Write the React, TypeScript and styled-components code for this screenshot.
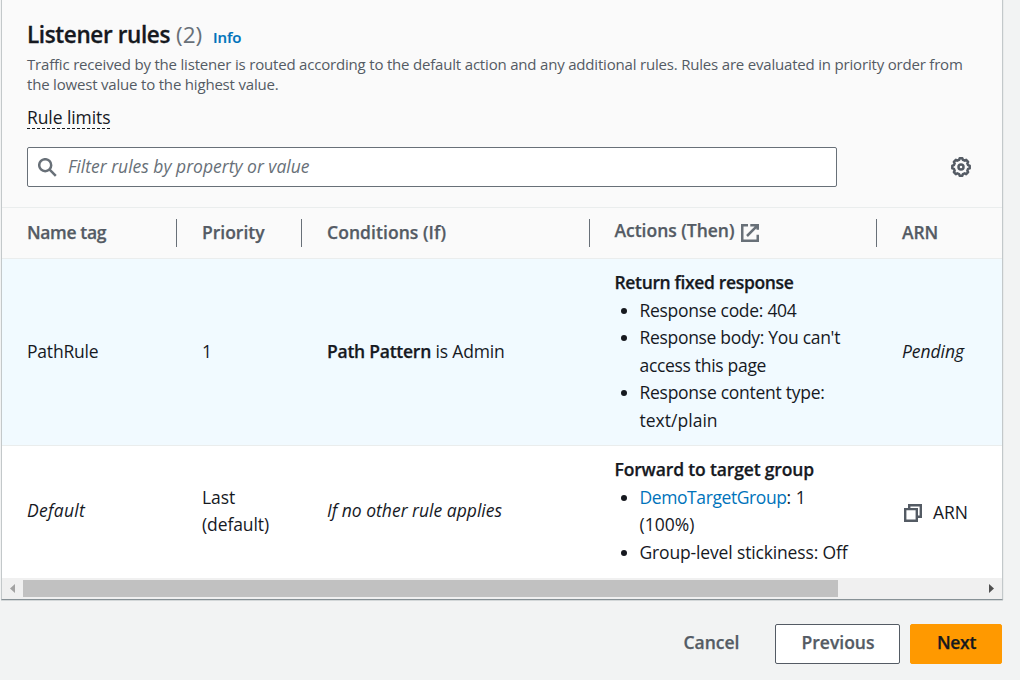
import React from 'react';
import styled, { createGlobalStyle } from 'styled-components';

const GlobalStyle = createGlobalStyle`
  * { box-sizing: border-box; }
  body {
    margin: 0;
    height: 680px;
    overflow: hidden;
    background: #f2f3f3;
    color: #16191f;
    font: 400 17.5px/27.5px "Open Sans", "Noto Sans", sans-serif;
  }
`;

const Page = styled.main`
  width: 1020px;
  height: 680px;
  padding: 0 17px 0 1px;
`;

const Card = styled.section`
  height: 600px;
  border: 1px solid #c3c8ca;
  border-top: 0;
  border-bottom-color: #879196;
  background: #fff;
  box-shadow: 0 1px 0 #d3d7d8, 1px 0 0 #e9ebeb;
`;

const CardHeader = styled.header`
  height: 208px;
  padding: 21px 25px 0;
  background: #fafafa;
  border-bottom: 1px solid #eaeded;
`;

const Tracked = styled.span<{ $ls: number }>`
  letter-spacing: ${(p) => p.$ls}px;
`;

const Strong = styled(Tracked)`
  font-weight: 600;
  -webkit-text-stroke: 0.25px currentColor;
`;

const Emphasis = styled(Tracked)`
  font-style: italic;
`;

const TitleRow = styled.div`
  display: flex;
  align-items: baseline;
  height: 27px;
  line-height: 28px;
`;

const Title = styled.h2`
  margin: 0;
  width: 149px;
  font-size: 22.5px;
  font-weight: 600;
  letter-spacing: -0.38px;
  -webkit-text-stroke: 0.3px currentColor;
  white-space: nowrap;
`;

const Counter = styled.span`
  width: 37px;
  color: #687078;
  font-size: 22.5px;
`;

const InfoLink = styled.a`
  color: #0073bb;
  font-size: 15px;
  font-weight: 600;
  letter-spacing: -0.08px;
  -webkit-text-stroke: 0.2px currentColor;
`;

const Description = styled.p`
  margin: 6px 0 0;
  color: #545b64;
  font-size: 15px;
  line-height: 20px;
  letter-spacing: -0.19px;
`;

const LimitsTrigger = styled.div`
  width: fit-content;
  height: 23px;
  margin-top: 12px;
  border-bottom: 1px dashed #16191f;
  line-height: 23px;
  letter-spacing: -0.08px;
`;

const FilterBar = styled.div`
  display: flex;
  align-items: center;
  justify-content: space-between;
  margin-top: 18px;
  padding-right: 6px;
`;

const SearchField = styled.div`
  display: flex;
  align-items: center;
  gap: 11px;
  width: 810px;
  height: 40px;
  padding: 0 10px;
  border: 1px solid #687078;
  border-radius: 2px;
  background: #fff;
  color: #687078;
`;

const Placeholder = styled.span`
  font-style: italic;
`;

const Icon = styled.svg<{ $color: string }>`
  flex: none;
  display: block;
  fill: none;
  stroke: ${(p) => p.$color};
`;

const GridRow = styled.div`
  display: grid;
  grid-template-columns: 175px 125px 287.5px 287.5px 125px;
`;

const HeadRow = styled(GridRow)`
  height: 51px;
  align-items: center;
  background: #fafafa;
  border-bottom: 1px solid #eaeded;
  color: #545b64;
  font-weight: 600;
  -webkit-text-stroke: 0.25px currentColor;
`;

const HeadCell = styled.div<{ $last?: boolean }>`
  display: flex;
  align-items: center;
  height: 28px;
  padding-left: 25px;
  border-right: ${(p) => (p.$last ? '0' : '1px solid #687078')};
  white-space: nowrap;
`;

const ActionsLabel = styled(Tracked)`
  margin-right: 6.8px;
  padding-bottom: 4px;
`;

const BodyRow = styled(GridRow)<{ $height: number; $highlight?: boolean }>`
  height: ${(p) => p.$height}px;
  align-items: center;
  padding-bottom: ${(p) => (p.$highlight ? 1 : 2)}px;
  background: ${(p) => (p.$highlight ? '#f1faff' : '#fff')};
  border-bottom: ${(p) => (p.$highlight ? '1px solid #eaeded' : '0')};
`;

const Cell = styled.div`
  padding: 0 25px;
`;

const ArnCell = styled.div`
  display: flex;
  align-items: center;
  gap: 11px;
  padding: 4px 0 0 27px;
`;

const ActionList = styled.ul`
  margin: 0;
  padding: 0 0 0 25px;
`;

const ActionItem = styled.li<{ $ls: number }>`
  letter-spacing: ${(p) => p.$ls}px;
`;

const TargetLink = styled.a`
  color: #0073bb;
  letter-spacing: -0.41px;
`;

const ScrollTrack = styled.div`
  display: flex;
  align-items: center;
  height: 21px;
  background: #f0f0f0;
`;

const ScrollThumb = styled.div`
  width: 815px;
  height: 17px;
  margin-right: auto;
  background: #c1c1c1;
`;

const ScrollArrow = styled.svg<{ $enabled?: boolean }>`
  flex: none;
  width: 21px;
  height: 21px;
  fill: ${(p) => (p.$enabled ? '#505050' : '#a3a3a3')};
`;

const Footer = styled.footer`
  display: flex;
  justify-content: flex-end;
  gap: 10px;
  margin-top: 24px;
  padding-right: 1px;
`;

const Button = styled.button<{ $kind: 'link' | 'normal' | 'primary'; $width: number; $ls?: number }>`
  width: ${(p) => p.$width}px;
  height: 40px;
  padding: 0 0 2px 1px;
  border: 1px solid
    ${(p) => ({ link: 'transparent', normal: '#545b64', primary: '#ff9900' })[p.$kind]};
  border-radius: 2px;
  background: ${(p) => ({ link: 'transparent', normal: '#fff', primary: '#ff9900' })[p.$kind]};
  color: ${(p) => (p.$kind === 'primary' ? '#16191f' : '#545b64')};
  font: inherit;
  font-weight: 600;
  letter-spacing: ${(p) => p.$ls ?? 0}px;
  -webkit-text-stroke: 0.25px currentColor;
`;

const gearPath = (() => {
  const points: string[] = [];
  for (let i = 0; i < 8; i += 1) {
    [[-9, 8.8], [9, 8.8], [15, 7.3], [30, 7.3]].forEach(([offset, radius]) => {
      const a = ((i * 45 + offset - 90) * Math.PI) / 180;
      points.push(`${(10 + radius * Math.cos(a)).toFixed(2)} ${(10 + radius * Math.sin(a)).toFixed(2)}`);
    });
  }
  return `M${points.join('L')}Z`;
})();

const SearchIcon = () => (
  <Icon $color="#687078" width="19" height="19" viewBox="0 0 19 19" strokeWidth="2.5">
    <circle cx="7.2" cy="7.2" r="6" />
    <path d="M11.4 11.4L17.8 17.8" />
  </Icon>
);

const GearIcon = () => (
  <Icon $color="#545b64" width="20" height="20" viewBox="0 0 20 20" strokeWidth="2.5" strokeLinejoin="round">
    <path d={gearPath} />
    <circle cx="10" cy="10" r="2.5" />
  </Icon>
);

const ExternalIcon = () => (
  <Icon $color="#687078" width="18" height="18" viewBox="0 0 18 18" strokeWidth="2.5">
    <path d="M7 1.25H1.25v15.5h15.5V10.8" />
    <path d="M9.3 1.25h7.45v4.6M16.6 1.4L6 12" />
  </Icon>
);

const CopyIcon = () => (
  <Icon $color="#545b64" width="18" height="18" viewBox="0 0 18 18" strokeWidth="2.4">
    <path d="M1.2 5.1h11.6v11.7H1.2z" />
    <path d="M5.2 5V1.2h11.6v11.6H13" />
  </Icon>
);

export default function App() {
  return (
    <Page>
      <GlobalStyle />
      <Card>
        <CardHeader>
          <TitleRow>
            <Title>Listener rules</Title>
            <Counter>(2)</Counter>
            <InfoLink>Info</InfoLink>
          </TitleRow>
          <Description>
            Traffic received by the listener is routed according to the default action and any
            additional rules. Rules are evaluated in priority order from the lowest value to the
            highest value.
          </Description>
          <LimitsTrigger>Rule limits</LimitsTrigger>
          <FilterBar>
            <SearchField>
              <SearchIcon />
              <Placeholder>Filter rules by property or value</Placeholder>
            </SearchField>
            <GearIcon />
          </FilterBar>
        </CardHeader>

        <HeadRow>
          <HeadCell><Tracked $ls={-0.37}>Name tag</Tracked></HeadCell>
          <HeadCell><Tracked $ls={0}>Priority</Tracked></HeadCell>
          <HeadCell><Tracked $ls={0.06}>Conditions (If)</Tracked></HeadCell>
          <HeadCell>
            <ActionsLabel $ls={-0.02}>Actions (Then)</ActionsLabel>
            <ExternalIcon />
          </HeadCell>
          <HeadCell $last><Tracked $ls={-0.15}>ARN</Tracked></HeadCell>
        </HeadRow>

        <BodyRow $height={187} $highlight>
          <Cell><Tracked $ls={-0.19}>PathRule</Tracked></Cell>
          <Cell>1</Cell>
          <Cell>
            <Strong $ls={-0.25}>Path Pattern</Strong> <Tracked $ls={-0.18}>is Admin</Tracked>
          </Cell>
          <Cell>
            <Strong $ls={-0.35}>Return fixed response</Strong>
            <ActionList>
              <ActionItem $ls={-0.29}>Response code: 404</ActionItem>
              <ActionItem $ls={-0.31}>Response body: You can't access this page</ActionItem>
              <ActionItem $ls={-0.27}>
                Response content type: <Tracked $ls={0.02}>text/plain</Tracked>
              </ActionItem>
            </ActionList>
          </Cell>
          <Cell><Emphasis $ls={-0.06}>Pending</Emphasis></Cell>
        </BodyRow>

        <BodyRow $height={132}>
          <Cell><Emphasis $ls={0.28}>Default</Emphasis></Cell>
          <Cell><Tracked $ls={-0.1}>Last (default)</Tracked></Cell>
          <Cell><Emphasis $ls={0}>If no other rule applies</Emphasis></Cell>
          <Cell>
            <Strong $ls={-0.15}>Forward to target group</Strong>
            <ActionList>
              <ActionItem $ls={0}><TargetLink>DemoTargetGroup</TargetLink>: 1 (100%)</ActionItem>
              <ActionItem $ls={-0.15}>Group-level stickiness: Off</ActionItem>
            </ActionList>
          </Cell>
          <ArnCell>
            <CopyIcon />
            <Tracked $ls={-0.1}>ARN</Tracked>
          </ArnCell>
        </BodyRow>

        <ScrollTrack>
          <ScrollArrow viewBox="0 0 21 21"><path d="M13 6v9L8 10.5z" /></ScrollArrow>
          <ScrollThumb />
          <ScrollArrow $enabled viewBox="0 0 21 21"><path d="M8 6v9l5-4.5z" /></ScrollArrow>
        </ScrollTrack>
      </Card>

      <Footer>
        <Button $kind="link" $width={108}>Cancel</Button>
        <Button $kind="normal" $width={125}>Previous</Button>
        <Button $kind="primary" $width={92} $ls={-0.3}>Next</Button>
      </Footer>
    </Page>
  );
}
